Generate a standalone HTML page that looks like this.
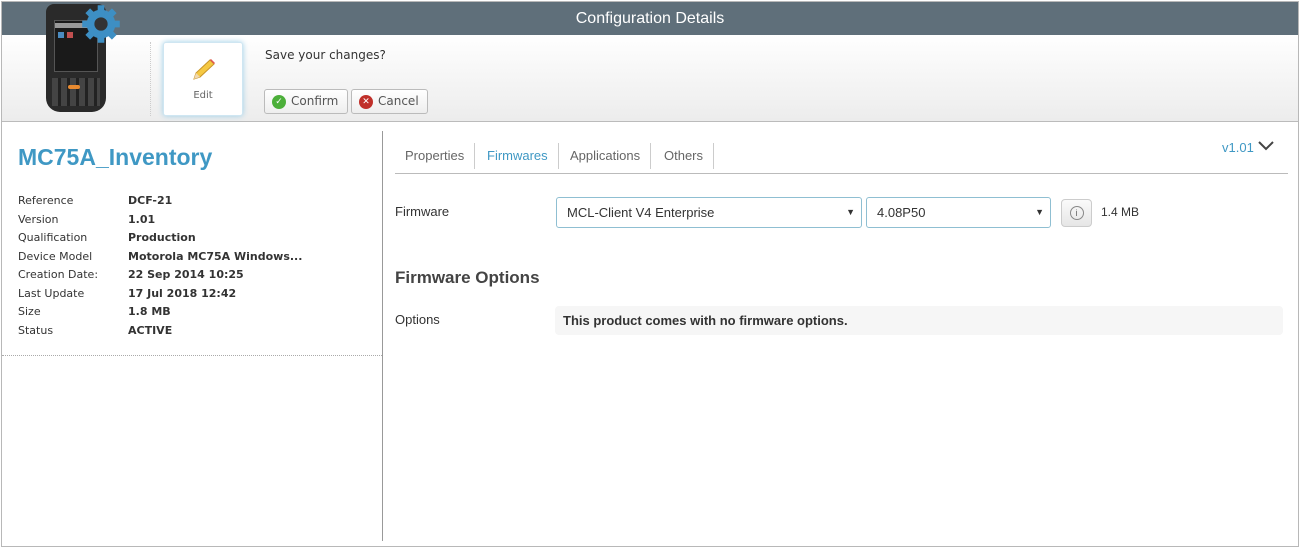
<!DOCTYPE html>
<html><head><meta charset="utf-8"><style>
*{margin:0;padding:0;box-sizing:border-box}
body{width:1300px;height:548px;background:#fff;position:relative;overflow:hidden;font-family:"Liberation Sans",sans-serif;color:#333}
.frame{position:absolute;left:1px;top:1px;width:1298px;height:546px;border:1px solid #b8b8b8}
.hdr{position:absolute;left:2px;top:2px;width:1296px;height:33px;background:#5f6f7a;color:#fff;font-size:16px;text-align:center;line-height:33px}
.tb{position:absolute;left:2px;top:35px;width:1296px;height:87px;background:linear-gradient(#fff,#ececec);border-bottom:1px solid #bbb}
.ab{position:absolute}
.edit{left:163px;top:42px;width:80px;height:74px;background:#fff;border-radius:3px;box-shadow:0 0 6px #9fd0e8;border:1px solid #cfe6f2;text-align:center;font-family:"DejaVu Sans",sans-serif;font-size:10px;color:#666}
.btn{top:89px;height:25px;border:1px solid #bbb;border-radius:3px;background:linear-gradient(#fff,#eee);font-family:"DejaVu Sans",sans-serif;font-size:12px;color:#555;line-height:23px;padding-left:26px}
.ic{position:absolute;left:7px;top:5px;width:14px;height:14px;border-radius:50%;color:#fff;font-size:9px;line-height:14px;text-align:center;font-weight:bold;padding:0}
.left{font-family:"DejaVu Sans",sans-serif;font-size:11px}
.row{position:absolute;left:18px}
.row b{position:absolute;left:110px;white-space:nowrap}
.tab{position:absolute;top:143px;height:26px;font-size:13px;color:#666;border-right:1px solid #ccc;padding:0 10px;line-height:26px}
.sel{position:absolute;top:197px;height:31px;border:1px solid #8fbfd2;border-radius:3px;font-size:13px;color:#333;line-height:29px;padding-left:10px}
.sel span{position:absolute;right:6px;font-size:9px}
</style></head><body>
<div class="frame"></div>
<div class="hdr">Configuration Details</div>
<div class="tb"></div>
<!-- device -->
<div class="ab" style="left:46px;top:4px;width:60px;height:108px;background:#2a2a2a;border-radius:8px 8px 14px 14px"></div>
<div class="ab" style="left:54px;top:20px;width:44px;height:52px;background:#1a1a1a;border:1px solid #555"></div>
<div class="ab" style="left:55px;top:23px;width:42px;height:5px;background:#999"></div>
<div class="ab" style="left:58px;top:32px;width:6px;height:6px;background:#4a8bc0"></div>
<div class="ab" style="left:67px;top:32px;width:6px;height:6px;background:#c05050"></div>
<div class="ab" style="left:52px;top:78px;width:48px;height:28px;background:repeating-linear-gradient(90deg,#444 0 6px,#222 6px 9px)"></div>
<div class="ab" style="left:68px;top:85px;width:12px;height:4px;background:#e88a30;border-radius:2px"></div>
<svg class="ab" style="left:80px;top:3px" width="42" height="42" viewBox="0 0 38 38"><g fill="#3d8fc4"><circle cx="19" cy="19" r="13"/><g stroke="#3d8fc4" stroke-width="6"><line x1="19" y1="2" x2="19" y2="36"/><line x1="2" y1="19" x2="36" y2="19"/><line x1="7" y1="7" x2="31" y2="31"/><line x1="31" y1="7" x2="7" y2="31"/></g></g><circle cx="19" cy="19" r="6" fill="#333"/></svg>
<div class="ab" style="left:150px;top:42px;height:74px;border-left:1px dotted #ccc"></div>
<div class="ab edit"><svg style="margin-top:14px" width="26" height="26" viewBox="0 0 26 26"><path d="M4 22 L6 16 L20 3 L24 7 L10 20 Z" fill="#f5c842" stroke="#c9952a"/><path d="M20 3 L24 7 L25 6 L21 2Z" fill="#e25555"/><path d="M4 22 L6 16 L10 20Z" fill="#f0d8b0"/></svg><div style="margin-top:4px">Edit</div></div>
<div class="ab" style="left:265px;top:48px;font-family:'DejaVu Sans',sans-serif;font-size:12px;color:#333">Save your changes?</div>
<div class="ab btn" style="left:264px;width:84px"><span class="ic" style="background:#4caf3a">✓</span>Confirm</div>
<div class="ab btn" style="left:351px;width:77px"><span class="ic" style="background:#c0302a">✕</span>Cancel</div>
<!-- left -->
<div class="ab" style="left:18px;top:144px;font-size:23px;font-weight:bold;color:#3f98c4">MC75A_Inventory</div>
<div class="left">
<div class="row" style="top:194px">Reference<b>DCF-21</b></div>
<div class="row" style="top:213px">Version<b>1.01</b></div>
<div class="row" style="top:231px">Qualification<b>Production</b></div>
<div class="row" style="top:250px">Device Model<b>Motorola MC75A Windows...</b></div>
<div class="row" style="top:268px">Creation Date:<b>22 Sep 2014 10:25</b></div>
<div class="row" style="top:287px">Last Update<b>17 Jul 2018 12:42</b></div>
<div class="row" style="top:305px">Size<b>1.8 MB</b></div>
<div class="row" style="top:324px">Status<b>ACTIVE</b></div>
</div>
<div class="ab" style="left:2px;top:355px;width:380px;border-top:1px dotted #aaa"></div>
<div class="ab" style="left:382px;top:131px;height:410px;border-left:1px solid #999"></div>
<!-- right -->
<div class="tab" style="left:395px">Properties</div>
<div class="tab" style="left:477px;color:#3f98c4">Firmwares</div>
<div class="tab" style="left:560px">Applications</div>
<div class="tab" style="left:654px">Others</div>
<div class="ab" style="left:1222px;top:140px;font-size:13px;color:#3f98c4">v1.01</div>
<svg class="ab" style="left:1258px;top:141px" width="16" height="10"><path d="M1 1 L8 8 L15 1" stroke="#444" stroke-width="2" fill="none"/></svg>
<div class="ab" style="left:395px;top:173px;width:893px;border-top:1px solid #bbb"></div>
<div class="ab" style="left:395px;top:204px;font-size:13px">Firmware</div>
<div class="sel" style="left:556px;width:306px">MCL-Client V4 Enterprise<span>▼</span></div>
<div class="sel" style="left:866px;width:185px">4.08P50<span>▼</span></div>
<div class="ab" style="left:1061px;top:199px;width:31px;height:28px;border:1px solid #ccc;border-radius:4px;background:linear-gradient(#fafafa,#e6e6e6)"><div style="margin:6px auto;width:14px;height:14px;border:1px solid #888;border-radius:50%;font-size:9px;text-align:center;line-height:12px;color:#666">i</div></div>
<div class="ab" style="left:1101px;top:205px;font-size:12px">1.4 MB</div>
<div class="ab" style="left:395px;top:268px;font-size:17px;font-weight:bold;color:#444">Firmware Options</div>
<div class="ab" style="left:395px;top:312px;font-size:13px">Options</div>
<div class="ab" style="left:555px;top:306px;width:728px;height:29px;background:#f6f6f6;border-radius:4px;font-size:13px;font-weight:bold;line-height:29px;padding-left:8px">This product comes with no firmware options.</div>
</body></html>
